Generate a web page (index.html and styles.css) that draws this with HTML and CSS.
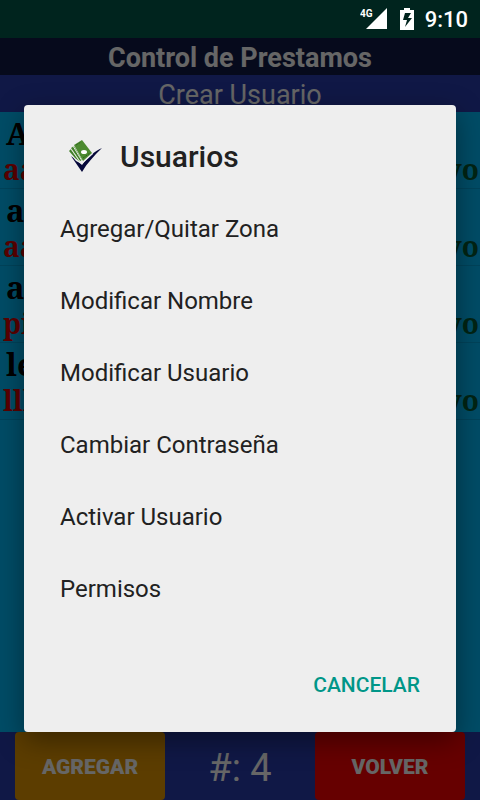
FILE: index.html
```html
<!DOCTYPE html>
<html lang="es">
<head>
    <meta charset="UTF-8">
    <meta name="viewport" content="width=device-width, initial-scale=1.0">
    <title>Control de Prestamos</title>
    <link rel="stylesheet" href="styles.css">
</head>
<body>
    <!-- Status bar -->
    <div class="status-bar">
        <svg class="signal" width="28" height="24" viewBox="0 0 28 24" aria-label="4G">
            <path d="M27 1V22H6Z" fill="#fff"/>
            <text x="0" y="10">4G</text>
        </svg>
        <svg class="battery" width="14" height="22" viewBox="0 0 14 22" aria-hidden="true">
            <path d="M4 0h6v2h4v20H0V2h4Z" fill="#fff"/>
            <path d="M11 5H5L3 12h4l-2 7 7-9H8Z" fill="#00241e"/>
        </svg>
        <span class="clock">9:10</span>
    </div>

    <div class="screen">
        <header>
            <h1>Control de Prestamos</h1>
            <h2>Crear Usuario</h2>
        </header>

        <!-- User list -->
        <ul class="user-list">
            <li>
                <div class="name">A</div>
                <div class="detail"><span class="login">aa</span><span class="state">Activo</span></div>
            </li>
            <li>
                <div class="name">a</div>
                <div class="detail"><span class="login">aa</span><span class="state">Activo</span></div>
            </li>
            <li>
                <div class="name">a</div>
                <div class="detail"><span class="login">pi</span><span class="state">Activo</span></div>
            </li>
            <li>
                <div class="name">le</div>
                <div class="detail"><span class="login">lll</span><span class="state">Activo</span></div>
            </li>
        </ul>

        <footer>
            <button class="add" type="button">AGREGAR</button>
            <span class="count">#: 4</span>
            <button class="back" type="button">VOLVER</button>
        </footer>

        <!-- Options dialog -->
        <div class="overlay">
            <div class="dialog" role="dialog" aria-labelledby="dialogTitle">
                <div class="dialog-title">
                    <svg width="36" height="36" viewBox="0 0 36 36" aria-hidden="true">
                        <path d="M4 17 8 20 15 26C21 18 28 12 35 9C27 17 20 24 15 33Z" fill="#06083a"/>
                        <path d="M1 12 4 8 15 0 26 15 15 25 9 22Z" fill="#eee"/>
                        <path d="M2 12 4 10 13 23 8 19Z" fill="#43802b"/>
                        <path d="M4 9 7 7 15 21 13 22Z" fill="#43802b"/>
                        <path d="M7 6 15 1 25 14 16 22Z" fill="#4c8a30"/>
                        <path d="M4 10 13 23M6 7 15 22" fill="none" stroke="#dde8d6"/>
                        <path d="M9 6 14 3M16 19 23 14" fill="none" stroke="#2f641e" stroke-dasharray="2 1"/>
                        <ellipse cx="17" cy="13" rx="3" ry="2" fill="#fff"/>
                    </svg>
                    <h3 id="dialogTitle">Usuarios</h3>
                </div>
                <div class="options">
                    <button type="button">Agregar/Quitar Zona</button>
                    <button type="button">Modificar Nombre</button>
                    <button type="button">Modificar Usuario</button>
                    <button type="button">Cambiar Contraseña</button>
                    <button type="button">Activar Usuario</button>
                    <button type="button">Permisos</button>
                </div>
                <div class="actions">
                    <button type="button">CANCELAR</button>
                </div>
            </div>
        </div>
    </div>
</body>
</html>
```
FILE: styles.css
```css
* {
    box-sizing: border-box;
    margin: 0;
    padding: 0;
}

body {
    font-family: Roboto, sans-serif;
    min-height: 100vh;
    display: flex;
    flex-direction: column;
}

button {
    font-family: inherit;
    border: none;
    cursor: pointer;
}

/* Status bar */
.status-bar {
    height: 38px;
    padding: 0 12px;
    background-color: #00241e;
    color: #fff;
    display: flex;
    align-items: center;
    justify-content: flex-end;
}

.signal text {
    font-size: 10px;
    font-weight: bold;
    fill: #fff;
}

.battery {
    margin: 0 11px 0 12px;
}

.clock {
    font-size: 22px;
    font-weight: 500;
}

.screen {
    position: relative;
    flex: 1;
    display: flex;
    flex-direction: column;
    background-color: #00bfff;
}

h1, h2 {
    height: 37px;
    line-height: 40px;
    font-size: 27px;
    text-align: center;
    color: #fff;
}

h1 {
    background-color: #0f1b48;
    font-weight: bold;
}

h2 {
    background-color: #283caf;
    font-weight: normal;
}

/* User list */
.user-list {
    flex: 1;
    list-style: none;
    font-family: "Noto Serif", "DejaVu Serif", serif;
    font-weight: bold;
    font-size: 28px;
}

.user-list li {
    height: 77px;
    border-bottom: 1px solid #00a8e0;
}

.name {
    padding: 0 6px;
    line-height: 42px;
    font-size: 31px;
    color: #000;
}

.detail {
    display: flex;
    justify-content: space-between;
    padding: 0 1px 0 3px;
    line-height: 30px;
}

.login {
    color: #e00000;
}

.state {
    color: #005a32;
}

footer {
    height: 68px;
    padding: 0 15px;
    display: flex;
    justify-content: space-between;
    background-color: #283caf;
    color: #fff;
}

footer button {
    width: 150px;
    padding-top: 2px;
    border-radius: 4px;
    color: #fff;
    font-size: 21px;
    font-weight: 900;
}

.add {
    background-color: #e69900;
}

.back {
    background-color: #ff0000;
}

.count {
    font-size: 38px;
    line-height: 72px;
}

/* Dialog */
.overlay {
    position: absolute;
    inset: 0;
    padding: 0 24px 2px;
    display: flex;
    align-items: center;
    background-color: rgba(0, 0, 0, 0.6);
}

.dialog {
    width: 100%;
    padding-bottom: 20px;
    background-color: #eee;
    border-radius: 4px;
    box-shadow: 0 8px 28px rgba(0, 0, 0, 0.4);
}

.dialog-title {
    display: flex;
    align-items: center;
    gap: 17px;
    height: 88px;
    padding: 16px 43px 0;
}

.dialog-title h3 {
    font-size: 30px;
    font-weight: 500;
    color: #212121;
}

.options button {
    display: block;
    width: 100%;
    height: 72px;
    padding: 0 36px;
    background: none;
    text-align: left;
    font-size: 24px;
    color: #212121;
}

.actions {
    display: flex;
    justify-content: flex-end;
    margin-top: 33px;
    padding: 0 24px;
}

.actions button {
    height: 54px;
    padding: 0 12px;
    background: none;
    font-size: 21px;
    font-weight: 500;
    color: #009688;
}
```
